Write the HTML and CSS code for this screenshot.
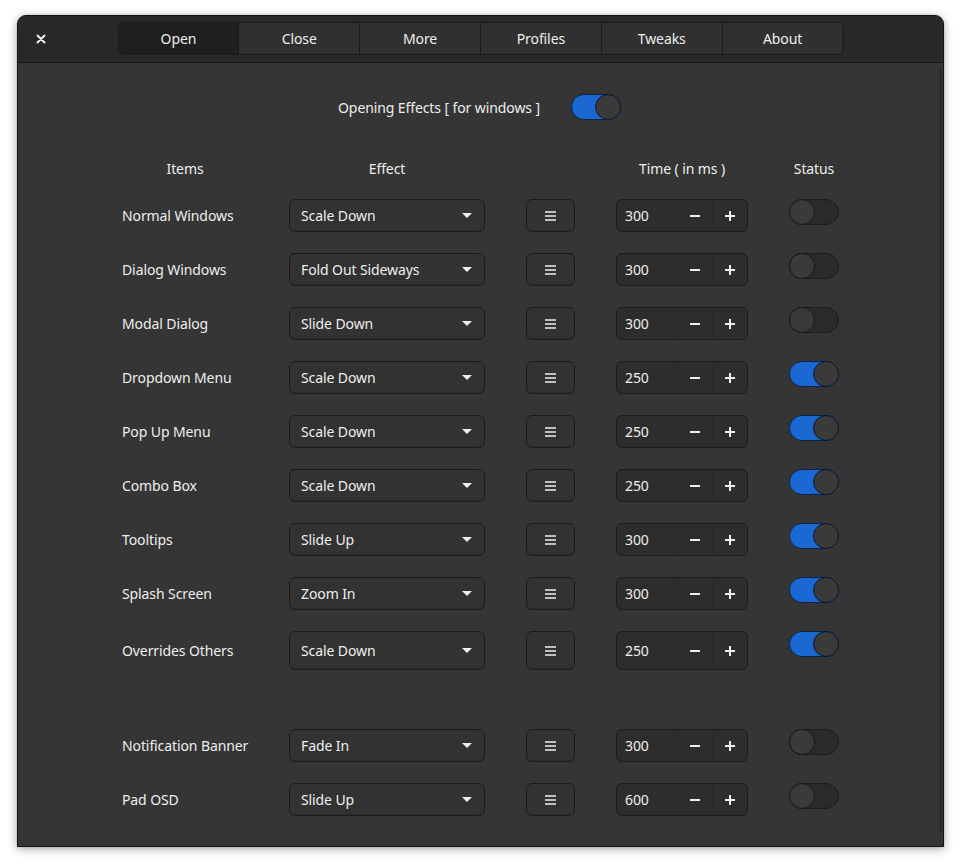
FILE: index.html
```html
<!DOCTYPE html>
<html>
<head>
<meta charset="utf-8">
<link rel="stylesheet" href="styles.css">
</head>
<body>
<div class="window">
  <header class="headerbar">
    <div class="hb-start">
      <button class="close-btn" aria-label="Close">
        <svg width="10" height="10" viewBox="0 0 10 10"><path d="M1.5 1.5 L8.5 8.5 M8.5 1.5 L1.5 8.5" stroke="#eeeeec" stroke-width="2" stroke-linecap="round"/></svg>
      </button>
    </div>
    <nav class="tabs">
      <div class="tab active">Open</div>
      <div class="tab">Close</div>
      <div class="tab">More</div>
      <div class="tab">Profiles</div>
      <div class="tab">Tweaks</div>
      <div class="tab">About</div>
    </nav>
    <div class="hb-end"></div>
  </header>

  <main class="content">
    <div class="scroll-indicator"></div>

    <div class="title-row">
      <span class="title-label">Opening Effects [ for windows ]</span>
      <div class="switch on"><span class="knob"></span></div>
    </div>

    <div class="table">
      <div class="row head">
        <div class="hcell">Items</div>
        <div class="hcell">Effect</div>
        <div class="hcell"></div>
        <div class="hcell">Time ( in ms )</div>
        <div class="hcell">Status</div>
      </div>

      <div class="row">
        <div class="label">Normal Windows</div>
        <div class="combo"><span>Scale Down</span><i class="arrow"></i></div>
        <div class="menu-btn"><svg width="11" height="10" viewBox="0 0 11 10"><path d="M0 1h11M0 5h11M0 9h11" stroke="#eeeeec" stroke-width="1.3"/></svg></div>
        <div class="spin"><span class="spin-val">300</span><span class="spin-btn"><svg width="10" height="10" viewBox="0 0 10 10"><path d="M0 5h10" stroke="#eeeeec" stroke-width="2"/></svg></span><span class="spin-btn"><svg width="10" height="10" viewBox="0 0 10 10"><path d="M0 5h10M5 0v10" stroke="#eeeeec" stroke-width="2"/></svg></span></div>
        <div class="switch"><span class="knob"></span></div>
      </div>

      <div class="row">
        <div class="label">Dialog Windows</div>
        <div class="combo"><span>Fold Out Sideways</span><i class="arrow"></i></div>
        <div class="menu-btn"><svg width="11" height="10" viewBox="0 0 11 10"><path d="M0 1h11M0 5h11M0 9h11" stroke="#eeeeec" stroke-width="1.3"/></svg></div>
        <div class="spin"><span class="spin-val">300</span><span class="spin-btn"><svg width="10" height="10" viewBox="0 0 10 10"><path d="M0 5h10" stroke="#eeeeec" stroke-width="2"/></svg></span><span class="spin-btn"><svg width="10" height="10" viewBox="0 0 10 10"><path d="M0 5h10M5 0v10" stroke="#eeeeec" stroke-width="2"/></svg></span></div>
        <div class="switch"><span class="knob"></span></div>
      </div>

      <div class="row">
        <div class="label">Modal Dialog</div>
        <div class="combo"><span>Slide Down</span><i class="arrow"></i></div>
        <div class="menu-btn"><svg width="11" height="10" viewBox="0 0 11 10"><path d="M0 1h11M0 5h11M0 9h11" stroke="#eeeeec" stroke-width="1.3"/></svg></div>
        <div class="spin"><span class="spin-val">300</span><span class="spin-btn"><svg width="10" height="10" viewBox="0 0 10 10"><path d="M0 5h10" stroke="#eeeeec" stroke-width="2"/></svg></span><span class="spin-btn"><svg width="10" height="10" viewBox="0 0 10 10"><path d="M0 5h10M5 0v10" stroke="#eeeeec" stroke-width="2"/></svg></span></div>
        <div class="switch"><span class="knob"></span></div>
      </div>

      <div class="row">
        <div class="label">Dropdown Menu</div>
        <div class="combo"><span>Scale Down</span><i class="arrow"></i></div>
        <div class="menu-btn"><svg width="11" height="10" viewBox="0 0 11 10"><path d="M0 1h11M0 5h11M0 9h11" stroke="#eeeeec" stroke-width="1.3"/></svg></div>
        <div class="spin"><span class="spin-val">250</span><span class="spin-btn"><svg width="10" height="10" viewBox="0 0 10 10"><path d="M0 5h10" stroke="#eeeeec" stroke-width="2"/></svg></span><span class="spin-btn"><svg width="10" height="10" viewBox="0 0 10 10"><path d="M0 5h10M5 0v10" stroke="#eeeeec" stroke-width="2"/></svg></span></div>
        <div class="switch on"><span class="knob"></span></div>
      </div>

      <div class="row">
        <div class="label">Pop Up Menu</div>
        <div class="combo"><span>Scale Down</span><i class="arrow"></i></div>
        <div class="menu-btn"><svg width="11" height="10" viewBox="0 0 11 10"><path d="M0 1h11M0 5h11M0 9h11" stroke="#eeeeec" stroke-width="1.3"/></svg></div>
        <div class="spin"><span class="spin-val">250</span><span class="spin-btn"><svg width="10" height="10" viewBox="0 0 10 10"><path d="M0 5h10" stroke="#eeeeec" stroke-width="2"/></svg></span><span class="spin-btn"><svg width="10" height="10" viewBox="0 0 10 10"><path d="M0 5h10M5 0v10" stroke="#eeeeec" stroke-width="2"/></svg></span></div>
        <div class="switch on"><span class="knob"></span></div>
      </div>

      <div class="row">
        <div class="label">Combo Box</div>
        <div class="combo"><span>Scale Down</span><i class="arrow"></i></div>
        <div class="menu-btn"><svg width="11" height="10" viewBox="0 0 11 10"><path d="M0 1h11M0 5h11M0 9h11" stroke="#eeeeec" stroke-width="1.3"/></svg></div>
        <div class="spin"><span class="spin-val">250</span><span class="spin-btn"><svg width="10" height="10" viewBox="0 0 10 10"><path d="M0 5h10" stroke="#eeeeec" stroke-width="2"/></svg></span><span class="spin-btn"><svg width="10" height="10" viewBox="0 0 10 10"><path d="M0 5h10M5 0v10" stroke="#eeeeec" stroke-width="2"/></svg></span></div>
        <div class="switch on"><span class="knob"></span></div>
      </div>

      <div class="row">
        <div class="label">Tooltips</div>
        <div class="combo"><span>Slide Up</span><i class="arrow"></i></div>
        <div class="menu-btn"><svg width="11" height="10" viewBox="0 0 11 10"><path d="M0 1h11M0 5h11M0 9h11" stroke="#eeeeec" stroke-width="1.3"/></svg></div>
        <div class="spin"><span class="spin-val">300</span><span class="spin-btn"><svg width="10" height="10" viewBox="0 0 10 10"><path d="M0 5h10" stroke="#eeeeec" stroke-width="2"/></svg></span><span class="spin-btn"><svg width="10" height="10" viewBox="0 0 10 10"><path d="M0 5h10M5 0v10" stroke="#eeeeec" stroke-width="2"/></svg></span></div>
        <div class="switch on"><span class="knob"></span></div>
      </div>

      <div class="row">
        <div class="label">Splash Screen</div>
        <div class="combo"><span>Zoom In</span><i class="arrow"></i></div>
        <div class="menu-btn"><svg width="11" height="10" viewBox="0 0 11 10"><path d="M0 1h11M0 5h11M0 9h11" stroke="#eeeeec" stroke-width="1.3"/></svg></div>
        <div class="spin"><span class="spin-val">300</span><span class="spin-btn"><svg width="10" height="10" viewBox="0 0 10 10"><path d="M0 5h10" stroke="#eeeeec" stroke-width="2"/></svg></span><span class="spin-btn"><svg width="10" height="10" viewBox="0 0 10 10"><path d="M0 5h10M5 0v10" stroke="#eeeeec" stroke-width="2"/></svg></span></div>
        <div class="switch on"><span class="knob"></span></div>
      </div>

      <div class="row tall">
        <div class="label">Overrides Others</div>
        <div class="combo"><span>Scale Down</span><i class="arrow"></i></div>
        <div class="menu-btn"><svg width="11" height="10" viewBox="0 0 11 10"><path d="M0 1h11M0 5h11M0 9h11" stroke="#eeeeec" stroke-width="1.3"/></svg></div>
        <div class="spin"><span class="spin-val">250</span><span class="spin-btn"><svg width="10" height="10" viewBox="0 0 10 10"><path d="M0 5h10" stroke="#eeeeec" stroke-width="2"/></svg></span><span class="spin-btn"><svg width="10" height="10" viewBox="0 0 10 10"><path d="M0 5h10M5 0v10" stroke="#eeeeec" stroke-width="2"/></svg></span></div>
        <div class="switch on"><span class="knob"></span></div>
      </div>

      <div class="row spaced">
        <div class="label">Notification Banner</div>
        <div class="combo"><span>Fade In</span><i class="arrow"></i></div>
        <div class="menu-btn"><svg width="11" height="10" viewBox="0 0 11 10"><path d="M0 1h11M0 5h11M0 9h11" stroke="#eeeeec" stroke-width="1.3"/></svg></div>
        <div class="spin"><span class="spin-val">300</span><span class="spin-btn"><svg width="10" height="10" viewBox="0 0 10 10"><path d="M0 5h10" stroke="#eeeeec" stroke-width="2"/></svg></span><span class="spin-btn"><svg width="10" height="10" viewBox="0 0 10 10"><path d="M0 5h10M5 0v10" stroke="#eeeeec" stroke-width="2"/></svg></span></div>
        <div class="switch"><span class="knob"></span></div>
      </div>

      <div class="row">
        <div class="label">Pad OSD</div>
        <div class="combo"><span>Slide Up</span><i class="arrow"></i></div>
        <div class="menu-btn"><svg width="11" height="10" viewBox="0 0 11 10"><path d="M0 1h11M0 5h11M0 9h11" stroke="#eeeeec" stroke-width="1.3"/></svg></div>
        <div class="spin"><span class="spin-val">600</span><span class="spin-btn"><svg width="10" height="10" viewBox="0 0 10 10"><path d="M0 5h10" stroke="#eeeeec" stroke-width="2"/></svg></span><span class="spin-btn"><svg width="10" height="10" viewBox="0 0 10 10"><path d="M0 5h10M5 0v10" stroke="#eeeeec" stroke-width="2"/></svg></span></div>
        <div class="switch"><span class="knob"></span></div>
      </div>
    </div>
  </main>
</div>
</body>
</html>
```

FILE: styles.css
```css
* { box-sizing: border-box; }

html, body {
  margin: 0;
  background: #ffffff;
}

body {
  padding: 15px 19px 17px 17px;
  font-family: "Noto Sans", "DejaVu Sans", sans-serif;
  font-size: 14px;
  letter-spacing: -0.1px;
  color: #eeeeec;
}

.window {
  border: 1px solid #151515;
  border-radius: 9px 9px 0 0;
  overflow: hidden;
  background: #353535;
  box-shadow: 0 2px 10px rgba(0, 0, 0, 0.35), 0 0 0 1px rgba(0, 0, 0, 0.05);
}

/* Header bar */
.headerbar {
  height: 47px;
  display: grid;
  grid-template-columns: 1fr auto 1fr;
  align-items: center;
  background: #282828;
  border-bottom: 1px solid #141414;
  padding: 0 6px;
}

.hb-start {
  display: flex;
  align-items: center;
}

.close-btn {
  width: 34px;
  height: 34px;
  display: flex;
  align-items: center;
  justify-content: center;
  background: transparent;
  border: none;
  padding: 0;
  margin-top: -1px;
}

.tabs {
  display: flex;
  width: 726px;
  height: 33px;
  border: 1px solid #1b1b1b;
  border-radius: 6px;
  overflow: hidden;
  margin-top: -1px;
}

.tab {
  flex: 1;
  display: flex;
  align-items: center;
  justify-content: center;
  background: #303030;
  border-left: 1px solid #1b1b1b;
  font-size: 14px;
  color: #eeeeec;
}

.tab:first-child { border-left: none; }

.tab.active {
  background: #1f1f1f;
}

/* Content */
.content {
  position: relative;
  padding: 31px 0 30px;
  display: flex;
  flex-direction: column;
  align-items: center;
}

.scroll-indicator {
  position: absolute;
  right: 1px;
  top: 3px;
  bottom: 14px;
  width: 3px;
  border-radius: 2px;
  background: #2c2c2c;
}

.title-row {
  display: flex;
  align-items: center;
  gap: 31px;
  height: 26px;
  margin-left: -2px;
}

.title-label {
  font-size: 14px;
}

.table {
  margin-top: 40px;
  display: flex;
  flex-direction: column;
  gap: 21px;
}

.row {
  display: grid;
  grid-template-columns: 126px 196px 49px 132px 50px;
  column-gap: 41px;
  align-items: center;
  height: 33px;
}

.row.head {
  height: 18px;
}

.row.tall {
  height: 39px;
}

.row.spaced {
  margin-top: 38px;
}

.hcell {
  text-align: center;
  line-height: 18px;
}

.label {
  white-space: nowrap;
}

/* Combo */
.combo {
  height: 100%;
  display: flex;
  align-items: center;
  justify-content: space-between;
  padding: 0 12px 0 11px;
  background: #323232;
  border: 1px solid #1c1c1c;
  border-radius: 6px;
  box-shadow: inset 0 -1px 0 rgba(0,0,0,0.12);
}

.arrow {
  width: 0;
  height: 0;
  border-left: 5px solid transparent;
  border-right: 5px solid transparent;
  border-top: 5px solid #eeeeec;
}

/* Menu button */
.menu-btn {
  height: 100%;
  display: flex;
  align-items: center;
  justify-content: center;
  background: #323232;
  border: 1px solid #1c1c1c;
  border-radius: 6px;
  box-shadow: inset 0 -1px 0 rgba(0,0,0,0.12);
}

/* Spin button */
.spin {
  height: 100%;
  display: flex;
  background: #2d2d2d;
  border: 1px solid #1c1c1c;
  border-radius: 6px;
  overflow: hidden;
}

.spin-val {
  flex: 1;
  display: flex;
  align-items: center;
  padding-left: 8px;
}

.spin-btn {
  width: 35px;
  display: flex;
  align-items: center;
  justify-content: center;
  border-left: 1px solid #282828;
}

/* Switch */
.switch {
  position: relative;
  width: 50px;
  height: 26px;
  border-radius: 13px;
  background: #2a2a2a;
  border: 1px solid #1c1c1c;
  align-self: start;
}

.title-row .switch { align-self: center; }

.knob {
  position: absolute;
  top: -1px;
  left: -1px;
  width: 26px;
  height: 26px;
  border-radius: 50%;
  background: #3a3a3a;
  border: 1px solid #1a1a1a;
}

.switch.on {
  background: #1c68d2;
  border-color: #0c2546;
}

.switch.on .knob {
  left: auto;
  right: -1px;
  border-color: #081a33;
}
```
